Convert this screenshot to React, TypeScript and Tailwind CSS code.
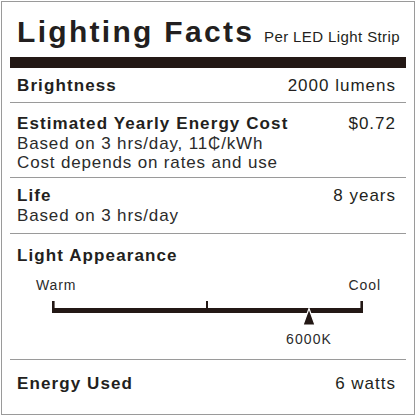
import React from 'react';

const ink = 'text-[#231f20]';

function Row({ label, value }: { label: string; value?: string }) {
  return (
    <div className="flex items-baseline justify-between">
      <span className="font-bold tracking-[1.1px]">{label}</span>
      {value && <span className="tracking-[1px]">{value}</span>}
    </div>
  );
}

function Scale() {
  return (
    <svg width="395" height="34" viewBox="0 0 395 34" className="block">
      <rect x="42" y="15" width="311" height="5" fill="#231815" />
      <rect x="42" y="8" width="2.6" height="12" fill="#231815" />
      <rect x="196" y="8" width="2" height="12" fill="#231815" />
      <rect x="350.4" y="8" width="2.6" height="12" fill="#231815" />
      <polygon points="299,15.5 293,32 305,32" fill="#231815" stroke="#ffffff" strokeWidth="1.2" />
    </svg>
  );
}

export default function App() {
  return (
    <div
      className={`h-[416px] w-[416px] bg-white p-[1px] ${ink}`}
      style={{ fontFamily: '"Liberation Sans", Arial, sans-serif' }}
    >
      <div className="flex h-[414px] flex-col border border-[#9a9a9a] px-[8px]">
        {/* title */}
        <div className="flex items-baseline justify-between pl-[7px] pr-[6px] pt-[15px]">
          <span className="text-[30px] font-bold leading-[30px] tracking-[2.3px]">Lighting Facts</span>
          <span className="text-[15px] leading-[15px] tracking-[0.4px]">Per LED Light Strip</span>
        </div>
        <div className="mt-[10px] h-[11px] bg-[#231815]" />

        <div className="px-[7px] pb-[7px] pr-[10px] pt-[8px] text-[17px] leading-[19px]">
          <Row label="Brightness" value="2000 lumens" />
        </div>
        <div className="h-px bg-[#9a9a9a]" />

        <div className="px-[7px] pb-[4.5px] pr-[10px] pt-[11px] text-[17px] leading-[19.5px]">
          <Row label="Estimated Yearly Energy Cost" value="$0.72" />
          <div className="tracking-[0.85px] text-[#2b2b2b]">Based on 3 hrs/day, 11₵/kWh</div>
          <div className="tracking-[0.85px] text-[#2b2b2b]">Cost depends on rates and use</div>
        </div>
        <div className="h-px bg-[#9a9a9a]" />

        <div className="px-[7px] pb-[8px] pr-[10px] pt-[8px] text-[17px] leading-[19.5px]">
          <Row label="Life" value="8 years" />
          <div className="tracking-[0.85px] text-[#2b2b2b]">Based on 3 hrs/day</div>
        </div>
        <div className="h-px bg-[#9a9a9a]" />

        <div className="pb-[12px] pt-[12px]">
          <div className="px-[7px] text-[17px] leading-[19.5px]">
            <Row label="Light Appearance" />
          </div>
          <div className="mt-[11.5px] flex justify-between pl-[26px] pr-[25px] text-[14px] leading-[16px] tracking-[0.9px] text-[#2b2b2b]">
            <span>Warm</span>
            <span>Cool</span>
          </div>
          <Scale />
          <div className="mt-[4px] pl-[276px] text-[14px] leading-[16px] tracking-[1.1px] text-[#2b2b2b]">6000K</div>
        </div>
        <div className="h-px bg-[#9a9a9a]" />

        <div className="px-[7px] pr-[10px] pt-[14px] text-[17px] leading-[19px]">
          <Row label="Energy Used" value="6 watts" />
        </div>
      </div>
    </div>
  );
}
